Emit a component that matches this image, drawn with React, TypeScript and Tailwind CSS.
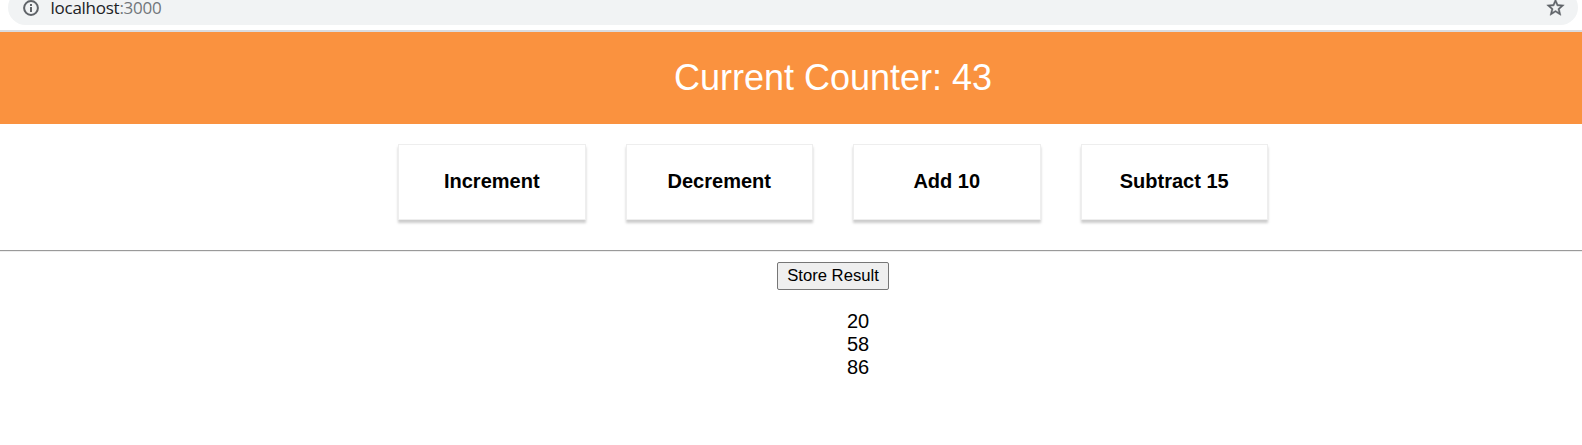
const actions = ['Increment', 'Decrement', 'Add 10', 'Subtract 15'];
const results = [20, 58, 86];

function AddressBar() {
  return (
    <div className="h-8 w-[1582px] overflow-hidden border-b-2 border-[#dadce0] bg-white pl-2 pr-[4px]">
      <div className="-mt-[10px] flex h-[35px] items-center rounded-full bg-[#f1f3f4] pl-[13.5px] pr-[12.5px]">
        <svg className="h-[18px] w-[18px] shrink-0" viewBox="0 0 18 18" fill="none" stroke="#5f6368">
          <circle cx="9" cy="9" r="6.9" strokeWidth="2" />
          <path d="M9 8v5M9 5v2" strokeWidth="2" />
        </svg>
        <span className="ml-[11px] -mt-px font-['Open_Sans','Noto_Sans',sans-serif] text-[17px] leading-[15px] tracking-[-0.26px] text-[#202124]">
          localhost<span className="text-[#72767a]">:3000</span>
        </span>
        <svg className="ml-auto h-[21px] w-[21px] shrink-0" viewBox="0 0 24 24" fill="#5f6368" stroke="#5f6368" strokeWidth="0.5">
          <path d="M22 9.24l-7.19-.62L12 2 9.19 8.63 2 9.24l5.46 4.73L5.82 21 12 17.27 18.18 21l-1.63-7.03L22 9.24zM12 15.4l-3.76 2.27 1-4.28-3.32-2.88 4.38-.38L12 6.1l1.71 4.04 4.38.38-3.32 2.88 1 4.28L12 15.4z" />
        </svg>
      </div>
    </div>
  );
}

export default function App() {
  return (
    <div className="h-[445px] w-full overflow-hidden bg-white font-['Liberation_Sans',Arial,sans-serif] text-black">
      <AddressBar />
      <main className="w-[1666px] text-center text-[20px] leading-[23px]">
        <header className="h-[92px] bg-[#fa923f] pt-[25px] text-[36px] leading-[42px] text-white">
          Current Counter: 43
        </header>
        <div className="flex h-[126px] justify-center gap-[40px] pt-5">
          {actions.map((label) => (
            <button
              key={label}
              className="flex h-[76px] w-[187.5px] items-center justify-center border border-[#eeeeee] bg-white pb-[2px] font-bold shadow-[0_2.5px_2.5px_#cccccc]"
            >
              {label}
            </button>
          ))}
        </div>
        <hr className="h-[2px] border-t border-b border-t-[#9a9a9a] border-b-[#eeeeee]" />
        <button className="mx-auto mt-[10px] flex h-7 w-28 items-center justify-center rounded-[2px] border border-[#767676] bg-[#efefef] pb-[2px] text-[16.67px] leading-[19px]">
          Store Result
        </button>
        <ul className="mt-5 pl-[50px]">
          {results.map((value) => (
            <li key={value}>{value}</li>
          ))}
        </ul>
      </main>
    </div>
  );
}
